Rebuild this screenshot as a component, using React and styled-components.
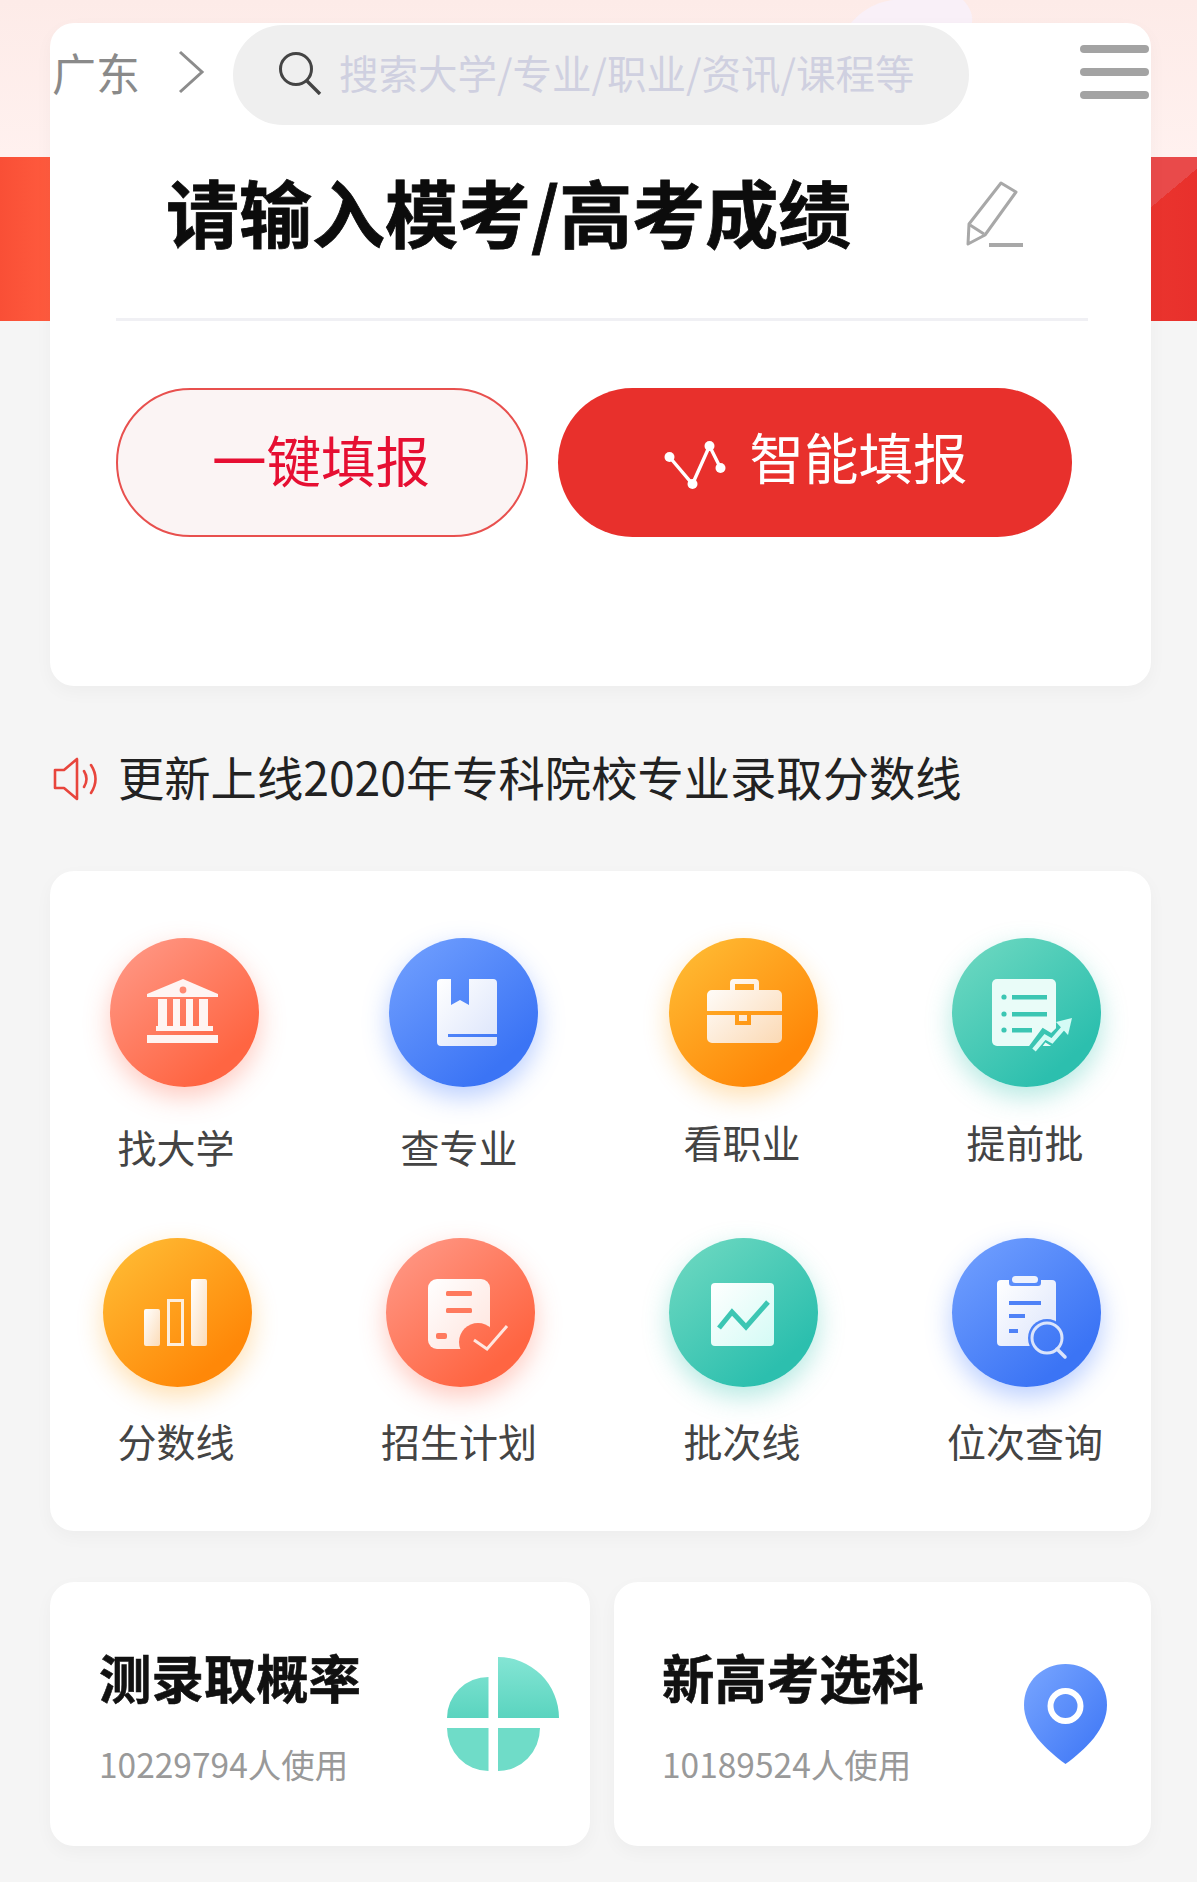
import React from 'react';
import styled, { createGlobalStyle } from 'styled-components';

const Global = createGlobalStyle`
  html, body { margin: 0; padding: 0; background: #f5f5f5; }
  * { box-sizing: border-box; }
  body { font-family: "Noto Sans CJK SC", "Noto Sans", sans-serif; }
`;

const Page = styled.div`
  position: relative;
  width: 1197px;
  height: 1882px;
  overflow: hidden;
  padding: 23px 46px 36px 50px;
  background:
    linear-gradient(140deg, #e94a4a 50%, transparent 50%) right 157px / 46px 62px no-repeat,
    linear-gradient(90deg, #f94f36 0, #ff5b3e 50px, #ff5b3e 60%, #e8302c 100%) 0 157px / 100% 164px no-repeat,
    linear-gradient(180deg, #fdebe8, #fff1ef) 0 0 / 100% 157px no-repeat,
    #f5f5f5;
`;

const HeroArt = styled.svg`
  position: absolute;
  left: 851px;
  top: 0;
  width: 122px;
  height: 23px;
`;

const Card = styled.section`
  position: relative;
  background: #fff;
  border-radius: 24px;
  box-shadow: 0 6px 18px rgba(0, 0, 0, 0.035);
`;

const MainCard = styled(Card)`
  height: 663px;
  padding-top: 2px;
`;

const TopRow = styled.div`
  display: flex;
  align-items: center;
  height: 100px;
  padding: 0 2px 0 2px;
`;

const City = styled.div`
  width: 88px;
  margin-top: -6px;
  font-size: 44px;
  line-height: 60px;
  color: #8a8a8a;
  white-space: nowrap;
`;

const Chevron = styled.svg`
  width: 28px;
  height: 44px;
  margin: -6px 0 0 37px;
`;

const SearchPill = styled.div`
  display: flex;
  align-items: center;
  width: 736px;
  height: 100px;
  margin-left: 28px;
  padding: 0 0 6px 45px;
  border-radius: 50px;
  background: #efefef;
`;

const SearchGlyph = styled.svg`
  width: 44px;
  height: 44px;
  flex: none;
  margin-top: 2px;
`;

const Placeholder = styled.span`
  margin-left: 17px;
  font-size: 39.5px;
  line-height: 50px;
  color: #cfd0e0;
  white-space: nowrap;
`;

const Menu = styled.div`
  display: flex;
  flex-direction: column;
  gap: 15px;
  width: 69px;
  margin: -6px 0 0 auto;
`;

const MenuBar = styled.span`
  display: block;
  height: 8px;
  border-radius: 4px;
  background: #a3a3a3;
`;

const TitleRow = styled.div`
  display: flex;
  align-items: center;
  height: 80px;
  margin-top: 50px;
  padding-left: 116px;
`;

const Title = styled.h1`
  width: 800px;
  margin: -10px 0 0;
  font-size: 73px;
  line-height: 80px;
  font-weight: 700;
  -webkit-text-stroke: 0.8px #0c0c0c;
  color: #0c0c0c;
  white-space: nowrap;
`;

const Pencil = styled.svg`
  width: 58px;
  height: 68px;
  flex: none;
`;

const Divider = styled.div`
  height: 3px;
  margin: 63px 63px 0 66px;
  background: #f0f0f4;
`;

const Buttons = styled.div`
  display: flex;
  gap: 30px;
  margin: 67px 0 0 66px;
`;

const Pill = styled.button`
  display: flex;
  align-items: center;
  justify-content: center;
  height: 149px;
  padding: 0;
  border-radius: 75px;
  font-family: inherit;
  font-size: 54.5px;
  line-height: 70px;
  white-space: nowrap;
`;

const OutlinePill = styled(Pill)`
  width: 412px;
  padding: 0 2px 8px 0;
  border: 2.5px solid #e8504e;
  background: #fbf4f4;
  color: #e60f32;
`;

const SolidPill = styled(Pill)`
  width: 514px;
  gap: 22px;
  padding: 0 0 14px 2px;
  border: 0;
  background: #e8302c;
  color: #fff;
`;

const Nodes = styled.svg`
  width: 63px;
  height: 48px;
  flex: none;
  margin-top: 18px;
`;

const Notice = styled.div`
  display: flex;
  align-items: center;
  gap: 18px;
  height: 60px;
  margin: 63px 0 62px 3px;
`;

const Speaker = styled.svg`
  width: 47px;
  height: 44px;
  flex: none;
`;

const NoticeText = styled.span`
  margin-top: -7px;
  font-size: 46.3px;
  line-height: 60px;
  color: #222;
  white-space: nowrap;
`;

const ToolCard = styled(Card)`
  display: grid;
  grid-template-columns: repeat(4, 160px);
  grid-template-rows: 300px auto;
  column-gap: 123px;
  height: 660px;
  padding: 67px 0 0 47px;
`;

const Tool = styled.div`
  display: flex;
  flex-direction: column;
  align-items: center;
`;

const TONES = {
  red: ['#ff9c8b', '#ff6542', 'rgba(255, 100, 70, 0.34)'],
  blue: ['#74a2ff', '#3b74f5', 'rgba(60, 120, 255, 0.36)'],
  orange: ['#ffc038', '#ff8808', 'rgba(255, 160, 20, 0.32)'],
  teal: ['#72dac2', '#2cbfae', 'rgba(50, 195, 175, 0.36)'],
};

const Disc = styled.div`
  width: 149px;
  height: 149px;
  flex: none;
  margin-left: ${(p) => p.$shift * 2}px;
  border-radius: 50%;
  background: linear-gradient(140deg, ${(p) => TONES[p.$tone][0]}, ${(p) => TONES[p.$tone][1]} 80%);
  box-shadow: 0 10px 26px ${(p) => TONES[p.$tone][2]};
`;

const Glyph = styled.svg`
  display: block;
  width: 149px;
  height: 149px;
`;

const ToolLabel = styled.div`
  margin-top: ${(p) => p.$gap}px;
  margin-left: -2px;
  font-size: 39px;
  line-height: 50px;
  color: #444;
  white-space: nowrap;
`;

const BottomRow = styled.div`
  display: grid;
  grid-template-columns: 540px 537px;
  gap: 24px;
  margin-top: 51px;
`;

const StatCard = styled(Card)`
  display: flex;
  justify-content: space-between;
  height: 264px;
`;

const StatBody = styled.div`
  padding: 59px 0 0 ${(p) => p.$left}px;
`;

const StatTitle = styled.div`
  font-size: 52.4px;
  line-height: 70px;
  font-weight: 700;
  -webkit-text-stroke: 0.6px #111;
  color: #111;
  white-space: nowrap;
`;

const StatSub = styled.div`
  margin-top: 31px;
  font-size: 33.5px;
  line-height: 44px;
  color: #999;
  white-space: nowrap;
`;

const Pie = styled.svg`
  width: 112px;
  height: 114px;
  margin: 75px 31px 0 0;
`;

const Pin = styled.svg`
  width: 83px;
  height: 100px;
  margin: 82px 44px 0 0;
`;

const Shine = ({ id, to }) => (
  <defs>
    <linearGradient id={id} x1="0" y1="0" x2="1" y2="1">
      <stop offset="0" stopColor="#fff" />
      <stop offset="1" stopColor={to} />
    </linearGradient>
  </defs>
);

const Bank = () => (
  <Glyph viewBox="0 0 149 149">
    <path fill="#fff" fillOpacity=".92" d="M73 41 108 56v3H37v-3z" />
    <circle cx="73" cy="52" r="3.4" fill="#ff8a72" />
    <path fill="#fff" fillOpacity=".92" d="M48 61h9v27h-9zM63 61h7v27h-7zM76 61h7v27h-7zM89 61h9v27h-9zM46 88h57v5H46zM37 97h71v8H37z" />
  </Glyph>
);

const Book = () => (
  <Glyph viewBox="0 0 149 149">
    <Shine id="sBook" to="#dbe4fb" />
    <path fill="url(#sBook)" d="M52 41h10v26l9-5 9 5V41h24a4 4 0 0 1 4 4v51H59v3h49v6a3 3 0 0 1-3 3H52a4 4 0 0 1-4-4V45a4 4 0 0 1 4-4z" />
  </Glyph>
);

const Case = () => (
  <Glyph viewBox="0 0 149 149">
    <Shine id="sCase" to="#fbd9b4" />
    <path fill="url(#sCase)" fillRule="evenodd" d="M61 52v-7a4 4 0 0 1 4-4h21a4 4 0 0 1 4 4v7h18a5 5 0 0 1 5 5v16H38V57a5 5 0 0 1 5-5zM66 46v6h19v-6zM38 77h28v10h16V77h31v23a5 5 0 0 1-5 5H43a5 5 0 0 1-5-5zM70 77v6h8v-6z" />
  </Glyph>
);

const ListUp = () => (
  <Glyph viewBox="0 0 149 149">
    <defs>
      <mask id="mList">
        <rect width="149" height="149" fill="#fff" />
        <path d="M78 116 92 97l8 5 16-16" fill="none" stroke="#000" strokeWidth="11" />
      </mask>
    </defs>
    <g mask="url(#mList)">
      <rect x="40" y="41" width="64" height="67" rx="5" fill="#e9fcf8" />
      <g fill="#3cc6b3">
        <circle cx="52" cy="59" r="2.6" />
        <circle cx="52" cy="76" r="2.6" />
        <circle cx="52" cy="92" r="2.6" />
        <rect x="60" y="57" width="35" height="4.5" />
        <rect x="60" y="74" width="35" height="4.5" />
        <rect x="60" y="90" width="20" height="4.5" />
      </g>
    </g>
    <path d="M82 112l11-13 7 4 13-15" fill="none" stroke="#d4fbf5" strokeWidth="4.5" />
    <path d="M104 84l16-4-4 17z" fill="#d4fbf5" />
  </Glyph>
);

const Bars = () => (
  <Glyph viewBox="0 0 149 149">
    <Shine id="sBars" to="#fcdcb8" />
    <rect x="41" y="71" width="16" height="37" rx="2" fill="url(#sBars)" />
    <rect x="65.5" y="62.5" width="14" height="44" fill="none" stroke="#fdeedd" strokeWidth="3" />
    <rect x="88" y="41" width="16" height="67" rx="2" fill="url(#sBars)" />
  </Glyph>
);

const DocCheck = () => (
  <Glyph viewBox="0 0 149 149">
    <Shine id="sDoc" to="#ffe3dc" />
    <defs>
      <mask id="mDoc">
        <rect width="149" height="149" fill="#fff" />
        <circle cx="92" cy="104" r="19" fill="#000" />
      </mask>
    </defs>
    <g mask="url(#mDoc)">
      <rect x="42" y="41" width="62" height="70" rx="9" fill="url(#sDoc)" />
      <g fill="#ff7a5e">
        <rect x="60" y="53" width="26" height="5" rx="1.5" />
        <rect x="60" y="70" width="26" height="5" rx="1.5" />
        <rect x="50" y="95" width="11" height="6" rx="2" />
      </g>
    </g>
    <path d="M88 102l13 9 20-23" fill="none" stroke="#ffe6df" strokeWidth="3" />
  </Glyph>
);

const Chart = () => (
  <Glyph viewBox="0 0 149 149">
    <Shine id="sChart" to="#d4fbf5" />
    <rect x="42" y="45" width="63" height="63" rx="4" fill="url(#sChart)" />
    <path d="M50 90 63 74l14 15 22-25" fill="none" stroke="#3cc6b3" strokeWidth="5" />
  </Glyph>
);

const Clip = () => (
  <Glyph viewBox="0 0 149 149">
    <Shine id="sClip" to="#dbe4fb" />
    <defs>
      <mask id="mClip">
        <rect width="149" height="149" fill="#fff" />
        <circle cx="95" cy="100" r="19" fill="#000" />
      </mask>
    </defs>
    <g mask="url(#mClip)">
      <path fill="url(#sClip)" d="M49 42h8v3a3 3 0 0 0 3 3h26a3 3 0 0 0 3-3v-3h11a4 4 0 0 1 4 4v62H49a4 4 0 0 1-4-4V46a4 4 0 0 1 4-4z" />
      <g fill="#4f82f7">
        <rect x="57" y="63" width="32" height="4" />
        <rect x="57" y="76" width="16" height="4" />
        <rect x="57" y="91" width="9" height="4" />
      </g>
    </g>
    <rect x="60" y="38" width="26" height="7" rx="3.5" fill="#eef2fd" />
    <circle cx="95" cy="100" r="15" fill="none" stroke="#dbe4fb" strokeWidth="3" />
    <path d="M105 111l8 8" stroke="#dbe4fb" strokeWidth="3.5" strokeLinecap="round" />
  </Glyph>
);

const TOOLS = [
  { label: '找大学', tone: 'red', shift: 7, gap: 34, Icon: Bank },
  { label: '查专业', tone: 'blue', shift: 3, gap: 34, Icon: Book },
  { label: '看职业', tone: 'orange', shift: 0, gap: 29, Icon: Case },
  { label: '提前批', tone: 'teal', shift: 0, gap: 29, Icon: ListUp },
  { label: '分数线', tone: 'orange', shift: 0, gap: 28, Icon: Bars },
  { label: '招生计划', tone: 'red', shift: 0, gap: 28, Icon: DocCheck },
  { label: '批次线', tone: 'teal', shift: 0, gap: 28, Icon: Chart },
  { label: '位次查询', tone: 'blue', shift: 0, gap: 28, Icon: Clip },
];

export default function App() {
  return (
    <Page>
      <Global />
      <HeroArt viewBox="0 0 122 23">
        <path d="M0 23C14 6 34 0 44 0h68c8 8 10 16 9 23z" fill="#f9f0f8" />
      </HeroArt>
      <MainCard>
        <TopRow>
          <City>广东</City>
          <Chevron viewBox="0 0 28 44">
            <path d="M3 2 25 22 3 42" fill="none" stroke="#8c8c8c" strokeWidth="3" />
          </Chevron>
          <SearchPill>
            <SearchGlyph viewBox="0 0 44 44">
              <circle cx="18" cy="18" r="15.5" fill="none" stroke="#444" strokeWidth="3" />
              <path d="M29 30 42 43" stroke="#444" strokeWidth="3.4" />
            </SearchGlyph>
            <Placeholder>搜索大学/专业/职业/资讯/课程等</Placeholder>
          </SearchPill>
          <Menu>
            <MenuBar />
            <MenuBar />
            <MenuBar />
          </Menu>
        </TopRow>
        <TitleRow>
          <Title>请输入模考/高考成绩</Title>
          <Pencil viewBox="0 0 58 68">
            <path d="M35 2 50 11 19 54 2 63l1-20z" fill="none" stroke="#a8a8a8" strokeWidth="3" strokeLinejoin="round" />
            <path d="M4 44 18 53" stroke="#a8a8a8" strokeWidth="3" />
            <path d="M23 64h34" stroke="#a8a8a8" strokeWidth="4" />
          </Pencil>
        </TitleRow>
        <Divider />
        <Buttons>
          <OutlinePill>一键填报</OutlinePill>
          <SolidPill>
            <Nodes viewBox="0 0 60 48">
              <path d="M4 16 27 43 44 5 55 27" fill="none" stroke="#fff" strokeWidth="3.4" />
              <circle cx="4" cy="16" r="5" fill="#fff" />
              <circle cx="27" cy="43" r="5" fill="#fff" />
              <circle cx="44" cy="5" r="5" fill="#fff" />
              <circle cx="55" cy="27" r="5" fill="#fff" />
            </Nodes>
            智能填报
          </SolidPill>
        </Buttons>
      </MainCard>
      <Notice>
        <Speaker viewBox="0 0 47 44">
          <path d="M2 13h9L24 2v40L11 31H2z" fill="none" stroke="#e8453c" strokeWidth="2.6" strokeLinejoin="round" />
          <path d="M31 14q5 8 0 16M38 8q9 14 0 28" fill="none" stroke="#e8453c" strokeWidth="2.6" strokeLinecap="round" />
        </Speaker>
        <NoticeText>更新上线2020年专科院校专业录取分数线</NoticeText>
      </Notice>
      <ToolCard>
        {TOOLS.map(({ label, tone, shift, gap, Icon }) => (
          <Tool key={label}>
            <Disc $tone={tone} $shift={shift}>
              <Icon />
            </Disc>
            <ToolLabel $gap={gap}>{label}</ToolLabel>
          </Tool>
        ))}
      </ToolCard>
      <BottomRow>
        <StatCard>
          <StatBody $left={49}>
            <StatTitle>测录取概率</StatTitle>
            <StatSub>10229794人使用</StatSub>
          </StatBody>
          <Pie viewBox="0 0 112 114">
            <defs>
              <linearGradient id="sPie" x1="0" y1="0" x2="0" y2="1">
                <stop offset="0" stopColor="#84e5d4" />
                <stop offset="1" stopColor="#5ad4bf" />
              </linearGradient>
            </defs>
            <path fill="url(#sPie)" d="M51 0A61 61 0 0 1 112 61H51zM41.5 20V61H0A41.5 41 0 0 1 41.5 20z" />
            <path fill="#6fdcc8" d="M0 71H41.5V114A41.5 43 0 0 1 0 71zM51 71H93A42 43 0 0 1 51 114z" />
          </Pie>
        </StatCard>
        <StatCard>
          <StatBody $left={48}>
            <StatTitle>新高考选科</StatTitle>
            <StatSub>10189524人使用</StatSub>
          </StatBody>
          <Pin viewBox="0 0 83 100">
            <defs>
              <linearGradient id="sPin" x1="0" y1="0" x2="1" y2="1">
                <stop offset="0" stopColor="#79a6ff" />
                <stop offset="1" stopColor="#3b74f5" />
              </linearGradient>
            </defs>
            <path fill="url(#sPin)" d="M41.5 0C64 0 83 17 83 41c0 24-21 44-41.5 59C21 85 0 65 0 41 0 17 19 0 41.5 0z" />
            <circle cx="41.5" cy="42" r="15" fill="none" stroke="#fff" strokeWidth="6" />
          </Pin>
        </StatCard>
      </BottomRow>
    </Page>
  );
}
